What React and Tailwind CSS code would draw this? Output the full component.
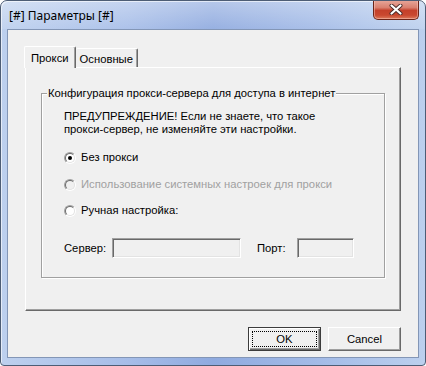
function Radio({ checked, disabled, label }) {
  return (
    <div className="flex items-center h-[13px]">
      <div className="w-[12px] h-[12px] rounded-full border border-t-[#a0a0a0] border-l-[#a0a0a0] border-b-white border-r-white">
        <div
          className={
            "w-[10px] h-[10px] rounded-full border border-t-[#696969] border-l-[#696969] border-b-[#e3e3e3] border-r-[#e3e3e3] flex items-center justify-center " +
            (disabled ? "bg-[#f0f0f0]" : "bg-white")
          }
        >
          {checked && <div className="w-[4px] h-[4px] rounded-full bg-black" />}
        </div>
      </div>
      <span className={"ml-[5px] " + (disabled ? "text-[#a0a0a0]" : "text-black")}>{label}</span>
    </div>
  );
}

function Field({ width }) {
  return (
    <div
      className="h-[20px] bg-[#f0f0f0] border border-t-[#a0a0a0] border-l-[#a0a0a0] border-b-white border-r-white shadow-[inset_1px_1px_0_#696969,inset_-1px_-1px_0_#e3e3e3]"
      style={{ width }}
    />
  );
}

function CloseButton() {
  return (
    <div className="mr-[6px] -mt-[1px] w-[46px] h-[20px] rounded-b-[5px] border border-t-0 border-[#6b2418] bg-[linear-gradient(180deg,#e8a99c_0%,#d9806f_40%,#c4402a_55%,#c9482f_80%,#dc7a5c_100%)] shadow-[inset_0_0_0_1px_rgba(255,210,200,0.45)] flex items-center justify-center">
      <svg width="14" height="11" viewBox="0 0 14 11">
        <path d="M2.5 1.5 L11.5 9.5 M11.5 1.5 L2.5 9.5" stroke="#4a2a28" strokeWidth="4" strokeLinecap="round" />
        <path d="M2.5 1.5 L11.5 9.5 M11.5 1.5 L2.5 9.5" stroke="#ffffff" strokeWidth="2.2" strokeLinecap="round" />
      </svg>
    </div>
  );
}

export default function App() {
  return (
    <div className="w-[426px] h-[366px] bg-white font-['Liberation_Sans',Arial,sans-serif] text-[11.25px] leading-[13px] text-black">
      <div className="w-[426px] h-[366px] flex flex-col rounded-t-[7px] rounded-b-[4px] border border-[#4d5d75] overflow-hidden bg-[linear-gradient(90deg,#bdd0ee_0%,#a6bde8_30%,#8faadf_50%,#a3bbe7_75%,#bcd0ee_100%)] shadow-[inset_1px_1px_0_rgba(255,255,255,0.6)]">
        <div className="h-[28px] flex items-start justify-between bg-[linear-gradient(180deg,rgba(255,255,255,0.35),rgba(255,255,255,0.08))]">
          <span className="pl-[8px] pt-[7px] text-[12px] leading-[15px] font-['Noto_Sans',sans-serif] text-black">[#] Параметры [#]</span>
          <CloseButton />
        </div>

        <div className="mx-[6px] h-[329px] border border-[#8396b6] bg-[#f0f0f0] flex flex-col pt-[16px] pl-[17px] pr-[17px]">
          <div className="flex items-end h-[21px]">
            <div className="relative z-10 -ml-[1px] -mb-[1px] h-[22px] px-[6px] pt-[5px] bg-[#f0f0f0] rounded-t-[2px] border-t border-l border-white border-r border-r-[#696969] shadow-[inset_-1px_0_0_#a0a0a0]">
              Прокси
            </div>
            <div className="h-[19px] px-[4px] pt-[4px] bg-[#f0f0f0] rounded-t-[2px] border-t border-white border-r border-r-[#696969] shadow-[inset_-1px_0_0_#a0a0a0]">
              Основные
            </div>
          </div>

          <div className="h-[244px] border-t border-l border-white border-r border-b border-r-[#696969] border-b-[#696969] shadow-[inset_-1px_-1px_0_#a0a0a0] pl-[15px] pt-[25px]">
            <div className="relative w-[344px] h-[185px] border border-[#a0a0a0] shadow-[1px_1px_0_#fff,inset_1px_1px_0_#fff] pl-[22px] pt-[16px]">
              <span className="absolute -top-[7px] left-[5px] px-[1px] bg-[#f0f0f0]">
                Конфигурация прокси-сервера для доступа в интернет
              </span>
              <p>ПРЕДУПРЕЖДЕНИЕ! Если не знаете, что такое</p>
              <p>прокси-сервер, не изменяйте эти настройки.</p>

              <div className="mt-[15px]">
                <Radio checked label="Без прокси" />
              </div>
              <div className="mt-[14px]">
                <Radio disabled label="Использование системных настроек для прокси" />
              </div>
              <div className="mt-[13px]">
                <Radio label="Ручная настройка:" />
              </div>

              <div className="mt-[21px] flex items-center">
                <span className="w-[48px]">Сервер:</span>
                <Field width={129} />
                <span className="ml-[16px] w-[40px]">Порт:</span>
                <Field width={57} />
              </div>
            </div>
          </div>

          <div className="mt-[16px] flex justify-end gap-[7px]">
            <div className="w-[73px] h-[24px] border border-[#3c3c3c] bg-[#f0f0f0] shadow-[inset_1px_1px_0_#fff,inset_-1px_-1px_0_#696969,inset_-2px_-2px_0_#a0a0a0] p-[3px]">
              <div className="w-full h-full border border-dotted border-black flex items-center justify-center">
                OK
              </div>
            </div>
            <div className="w-[73px] h-[24px] bg-[#f0f0f0] border border-t-white border-l-white border-b-[#696969] border-r-[#696969] shadow-[inset_-1px_-1px_0_#a0a0a0] flex items-center justify-center">
              Cancel
            </div>
          </div>
        </div>
      </div>
    </div>
  );
}
